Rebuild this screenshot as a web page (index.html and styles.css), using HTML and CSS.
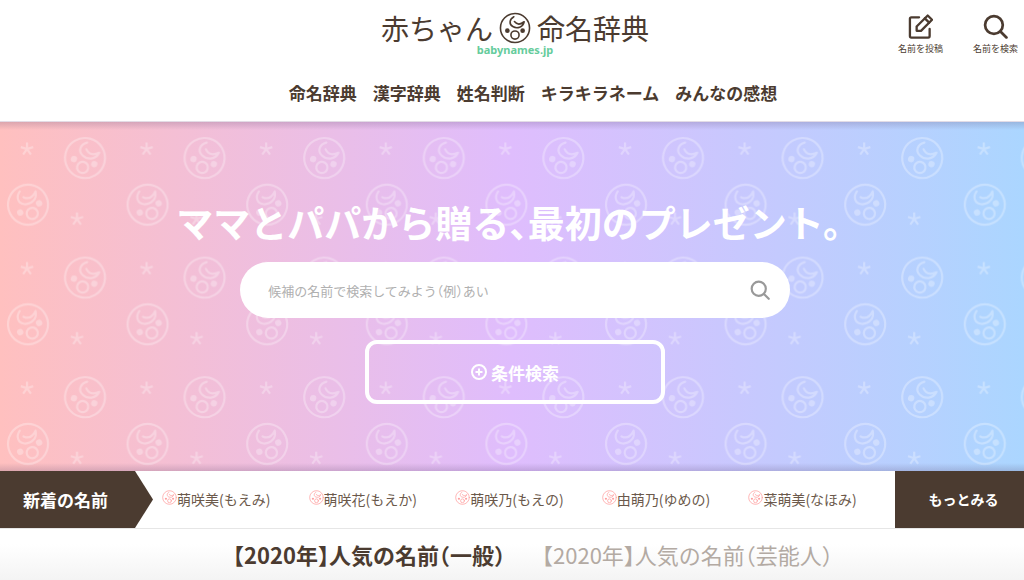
FILE: index.html
```html
<!DOCTYPE html>
<html lang="ja">
<head>
<meta charset="utf-8">
<meta name="viewport" content="width=device-width, initial-scale=1">
<title>赤ちゃん命名辞典</title>
<link rel="stylesheet" href="styles.css">
</head>
<body>
<svg class="defs" aria-hidden="true">
  <symbol id="face" viewBox="-22 -22 44 44">
    <g fill="none" stroke="currentColor" stroke-width="2.2" stroke-linecap="round" stroke-linejoin="round">
      <circle r="20"/>
      <circle cy="9.7" r="5.6"/>
      <path d="M-1.600 -15.500C-8 -12-8.500 -5-3 -2C3 1.500 11 -1 12.600 -8.600C8 -5 3 -4-.8 -8.800"/>
    </g>
    <g fill="currentColor"><circle cx="-10.500" cy="3.700" r="3.200"/><circle cx="10.500" cy="3.700" r="3.200"/></g>
  </symbol>
  <symbol id="search" viewBox="0 0 24 24">
    <g fill="none" stroke="currentColor" stroke-width="2.600" stroke-linecap="round"><circle cx="10.500" cy="10.500" r="8.500"/><path d="M17 17l5.500 5.500"/></g>
  </symbol>
</svg>

<header class="header">
  <div class="masthead">
    <a class="logo" href="#">
      <span class="logo-name"><span>赤ちゃん</span><svg class="logo-face"><use href="#face"/></svg><span>命名辞典</span></span>
      <span class="logo-domain">babynames.jp</span>
    </a>
    <div class="actions">
      <a class="action" href="#">
        <svg class="action-icon" viewBox="0 0 26 26" fill="none" stroke="currentColor" stroke-width="2.4" stroke-linejoin="round" stroke-linecap="round"><path d="M11.500 3.500H3.500Q2 3.500 2 5V23Q2 24.500 3.500 24.500H21Q22.500 24.500 22.500 23V15.500"/><path d="M9 17.500V13L20.500 1.500L25 6L13.500 17.500Z"/><path d="M17.500 4.500L22 9"/></svg>
        <span>名前を投稿</span>
      </a>
      <a class="action" href="#">
        <svg class="action-icon"><use href="#search"/></svg>
        <span>名前を検索</span>
      </a>
    </div>
  </div>
  <nav class="nav">
    <a href="#">命名辞典</a><a href="#">漢字辞典</a><a href="#">姓名判断</a><a href="#">キラキラネーム</a><a href="#">みんなの感想</a>
  </nav>
</header>

<main>
  <section class="hero">
    <svg class="hero-pattern" aria-hidden="true">
      <defs>
        <path id="star" d="M0 -6.500V0M0 0L6.200 -2M0 0L3.900 5.500M0 0L-3.900 5.500M0 0L-6.200 -2" stroke="currentColor" stroke-width="2.200" fill="none"/>
        <pattern id="faces" width="119.6" height="119.6" patternUnits="userSpaceOnUse">
          <use href="#face" width="44" height="44" transform="translate(85 36) rotate(14) translate(-22 -22)"/>
          <use href="#face" width="44" height="44" transform="translate(28 82.700) rotate(-26) translate(-22 -22)"/>
          <use href="#star" x="27" y="27"/>
          <use href="#star" x="77" y="97"/>
        </pattern>
      </defs>
      <rect width="100%" height="100%" fill="url(#faces)"/>
    </svg>
    <h1 class="hero-title">ママとパパから贈る、最初のプレゼント。</h1>
    <form class="search">
      <input class="search-input" type="text" aria-label="候補の名前" placeholder="候補の名前で検索してみよう（例）あい">
      <button class="search-button" type="button" aria-label="検索"><svg><use href="#search"/></svg></button>
    </form>
    <button class="filter" type="button">
      <svg class="filter-icon" viewBox="0 0 16 16" fill="none" stroke="currentColor" stroke-width="2"><circle cx="8" cy="8" r="7"/><path d="M8 4.500V11.500M4.500 8H11.500"/></svg>
      条件検索
    </button>
  </section>

  <section class="ticker">
    <h2 class="ticker-label">新着の名前</h2>
    <ul class="ticker-list">
      <li><a href="#"><svg><use href="#face"/></svg>萌咲美(もえみ)</a></li>
      <li><a href="#"><svg><use href="#face"/></svg>萌咲花(もえか)</a></li>
      <li><a href="#"><svg><use href="#face"/></svg>萌咲乃(もえの)</a></li>
      <li><a href="#"><svg><use href="#face"/></svg>由萌乃(ゆめの)</a></li>
      <li><a href="#"><svg><use href="#face"/></svg>菜萌美(なほみ)</a></li>
    </ul>
    <a class="ticker-more" href="#">もっとみる</a>
  </section>

  <section class="ranking">
    <button class="tab tab-active" type="button">【2020年】人気の名前（一般）</button>
    <button class="tab" type="button">【2020年】人気の名前（芸能人）</button>
  </section>
</main>
</body>
</html>
```
FILE: styles.css
```css
* { box-sizing: border-box; }

body {
  margin: 0;
  color: #4b3b30;
  background: #fff;
  font-family: "Noto Sans CJK JP", sans-serif;
  font-feature-settings: "halt";
}

a { color: inherit; text-decoration: none; }
button, input { font: inherit; font-feature-settings: inherit; color: inherit; border: 0; padding: 0; background: none; }
button { cursor: pointer; }
svg { display: block; }
.defs { position: absolute; width: 0; height: 0; }

.header { border-bottom: 1px solid #e3dce6; }

.masthead {
  display: grid;
  grid-template-columns: 1fr auto 1fr;
  padding: 12px 0 0 6px;
}
.logo { grid-column: 2; display: flex; flex-direction: column; align-items: center; }
.logo-name { display: flex; align-items: center; gap: 6px; font-size: 28px; line-height: 30px; }
.logo-face { width: 32px; height: 32px; stroke-width: 3px; }
.logo-domain { font: bold 11px/12px "Noto Sans", sans-serif; color: #66cc9c; }

.actions { display: flex; justify-content: flex-end; gap: 30px; padding: 2px 6px 0 0; }
.action { display: flex; flex-direction: column; align-items: center; gap: 3px; font-size: 9px; line-height: 14px; }
.action-icon { width: 25px; height: 25px; }

.nav {
  display: flex;
  justify-content: center;
  gap: 16px;
  padding: 25px 0 16px 42px;
  font-size: 17px;
  line-height: 24px;
  font-weight: bold;
}

.hero {
  position: relative;
  display: flex;
  flex-direction: column;
  align-items: center;
  padding: 72px 0 67px 6px;
  background:
    linear-gradient(rgba(80, 60, 100, 0.2), rgba(80, 60, 100, 0) 8px),
    linear-gradient(0deg, rgba(80, 60, 100, 0.2), rgba(80, 60, 100, 0) 8px),
    linear-gradient(90deg, #ffc0bf, #dfbdfd 50%, #abd6ff);
}
.hero > * { position: relative; }
.hero > .hero-pattern { position: absolute; inset: 0; width: 100%; height: 100%; color: #fff; opacity: 0.3; }
.hero-title { margin: 0 12px 0 0; color: #fff; font-size: 37px; line-height: 56px; font-weight: bold; }

.search {
  display: flex;
  align-items: center;
  width: 54%;
  height: 56px;
  margin: 12px 0 22px;
  padding: 0 20px 0 28px;
  border-radius: 28px;
  background: #fff;
}
.search-input { flex: 1; font-size: 13px; outline: 0; }
.search-input::placeholder { color: #b0b0b0; opacity: 1; }
.search-button { color: #999; }
.search-button svg { width: 20px; height: 20px; }

.filter {
  display: flex;
  align-items: center;
  justify-content: center;
  gap: 4px;
  width: 300px;
  height: 64px;
  border: 4px solid #fff;
  border-radius: 12px;
  color: #fff;
  font-size: 17px;
  font-weight: bold;
}
.filter-icon { width: 16px; height: 16px; }

.ticker { display: flex; border-bottom: 1px solid #e6e6e6; }
.ticker-label {
  width: 153px;
  margin: 0;
  padding-left: 23px;
  background: #4b3b30;
  color: #fff;
  font-size: 17px;
  line-height: 57px;
  clip-path: polygon(0 0, 135px 0, 100% 50%, 135px 100%, 0 100%);
}
.ticker-list {
  flex: 1;
  display: grid;
  grid-template-columns: repeat(5, 1fr);
  margin: 0;
  padding: 0 0 0 9px;
  list-style: none;
  font-size: 14px;
  line-height: 56px;
  white-space: nowrap;
  color: #6b594b;
}
.ticker-list a { display: flex; }
.ticker-list svg { width: 15px; height: 15px; margin-top: 19px; color: #ff9f9f; }
.ticker-more { width: 129px; padding-left: 8px; background: #4b3b30; color: #fff; font-size: 14px; line-height: 56px; font-weight: bold; text-align: center; }

.ranking {
  display: flex;
  justify-content: center;
  gap: 37px;
  padding: 9px 0 9px 42px;
  background: linear-gradient(#fff 30%, #f4f4f4);
}
.tab { color: #b3aaa3; font-size: 22px; line-height: 33px; white-space: nowrap; }
.tab-active { color: #4b3b30; font-weight: bold; }
```
